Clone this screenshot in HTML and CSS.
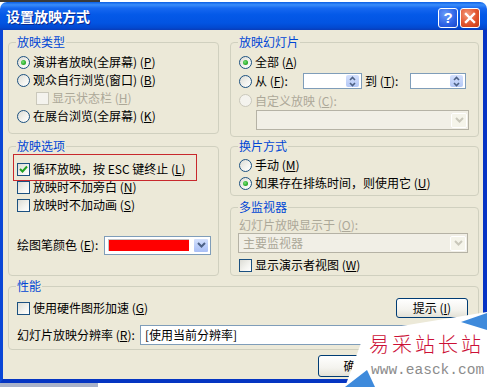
FILE: index.html
```html
<!DOCTYPE html>
<html lang="zh-CN">
<head>
<meta charset="utf-8">
<title>设置放映方式</title>
<link rel="stylesheet" href="styles.css">
</head>
<body>
<div class="window">
  <div class="topstrip"><span class="topstrip-dark"></span></div>
  <div class="titlebar">
    <span class="title">设置放映方式</span>
    <div class="tb-buttons">
      <span class="tb-btn help">?</span>
      <span class="tb-btn close"><svg width="12" height="12" viewBox="0 0 12 12"><path d="M2 2 L10 10 M10 2 L2 10" stroke="#fff" stroke-width="2.4" stroke-linecap="square"/></svg></span>
    </div>
  </div>
  <div class="frame">
    <div class="cols">
      <div class="col">
        <section class="g g-type">
          <span class="g-label">放映类型</span>
          <div class="row"><span class="radio on"></span><span>演讲者放映(全屏幕) (<u>P</u>)</span></div>
          <div class="row"><span class="radio"></span><span>观众自行浏览(窗口) (<u>B</u>)</span></div>
          <div class="row indent disabled"><span class="check dis"></span><span>显示状态栏 (<u>H</u>)</span></div>
          <div class="row"><span class="radio"></span><span>在展台浏览(全屏幕) (<u>K</u>)</span></div>
        </section>
        <section class="g g-opts">
          <span class="g-label">放映选项</span>
          <div class="highlight">
            <div class="row"><span class="check"><svg width="11" height="11" viewBox="0 0 11 11"><path d="M2 5 L4.5 7.5 L9 2.5" fill="none" stroke="#21A121" stroke-width="2"/></svg></span><span>循环放映，按 ESC 键终止 (<u>L</u>)</span></div>
          </div>
          <div class="row"><span class="check"></span><span>放映时不加旁白 (<u>N</u>)</span></div>
          <div class="row"><span class="check"></span><span>放映时不加动画 (<u>S</u>)</span></div>
          <div class="row pen-row">
            <span class="pen-label">绘图笔颜色 (<u>E</u>):</span>
            <span class="color-combo"><span class="swatch"></span><span class="drop-btn"><svg width="9" height="6" viewBox="0 0 9 6"><path d="M1 1 L4.5 4.5 L8 1" fill="none" stroke="#4D6185" stroke-width="2"/></svg></span></span>
          </div>
        </section>
      </div>
      <div class="col">
        <section class="g g-slides">
          <span class="g-label">放映幻灯片</span>
          <div class="row"><span class="radio on"></span><span>全部 (<u>A</u>)</span></div>
          <div class="row r-from"><span class="radio"></span><span class="from-label">从 (<u>F</u>):</span>
            <span class="spin w59"><span class="spin-btn"><svg width="7" height="11" viewBox="0 0 7 11"><path d="M1 4 L3.5 1.5 L6 4 M1 7 L3.5 9.5 L6 7" fill="none" stroke="#4D6185" stroke-width="1.6"/></svg></span></span>
            <span class="to-label">到 (<u>T</u>):</span>
            <span class="spin w56"><span class="spin-btn"><svg width="7" height="11" viewBox="0 0 7 11"><path d="M1 4 L3.5 1.5 L6 4 M1 7 L3.5 9.5 L6 7" fill="none" stroke="#4D6185" stroke-width="1.6"/></svg></span></span>
          </div>
          <div class="row r-custom disabled"><span class="radio dis"></span><span>自定义放映 (<u>C</u>):</span></div>
          <div class="combo dis custom-combo"><span class="combo-text"></span><span class="drop-btn dis"><svg width="9" height="6" viewBox="0 0 9 6"><path d="M1 1 L4.5 4.5 L8 1" fill="none" stroke="#C9C7BA" stroke-width="2"/></svg></span></div>
        </section>
        <section class="g g-advance">
          <span class="g-label">换片方式</span>
          <div class="row"><span class="radio"></span><span>手动 (<u>M</u>)</span></div>
          <div class="row"><span class="radio on"></span><span>如果存在排练时间，则使用它 (<u>U</u>)</span></div>
        </section>
        <section class="g g-monitor">
          <span class="g-label">多监视器</span>
          <div class="mon-label disabled">幻灯片放映显示于 (<u>O</u>):</div>
          <div class="combo dis mon-combo"><span class="combo-text">主要监视器</span><span class="drop-btn dis"><svg width="9" height="6" viewBox="0 0 9 6"><path d="M1 1 L4.5 4.5 L8 1" fill="none" stroke="#C9C7BA" stroke-width="2"/></svg></span></div>
          <div class="row mon-check"><span class="check"></span><span>显示演示者视图 (<u>W</u>)</span></div>
        </section>
      </div>
    </div>
    <section class="g g-perf">
      <span class="g-label">性能</span>
      <div class="row perf-row"><span class="check"></span><span>使用硬件图形加速 (<u>G</u>)</span><span class="btn tips">提示 (<u>I</u>)</span></div>
      <div class="row res-row"><span class="res-label">幻灯片放映分辨率 (<u>R</u>):</span><span class="combo res-combo"><span class="combo-text">[使用当前分辨率]</span></span></div>
    </section>
    <div class="actions">
      <span class="btn ok">确定</span>
      <span class="btn cancel"></span>
    </div>
  </div>
  <div class="bottomstrip"><span class="bottomstrip-gray"></span></div>

  <div class="watermark">
    <svg class="wm-bg" width="142" height="75" viewBox="0 0 142 75">
      <polygon points="20,20 142,0 142,75 0,75" fill="#ffffff"/>
      <polygon points="116,10 142,1 142,18" fill="#3E8ADB"/>
      <polygon points="0,75 22,58 30,75" fill="#3E8ADB"/>
    </svg>
    <div class="wm-text">
      <span class="wm-cn">易采站长站</span>
      <span class="wm-url">www.easck.com</span>
    </div>
  </div>
</div>
</body>
</html>
```
FILE: styles.css
```css
* { box-sizing: border-box; }
html, body { margin: 0; padding: 0; }
body {
  width: 487px;
  height: 387px;
  overflow: hidden;
  background: #ffffff;
  font-family: "Noto Sans CJK SC", "Liberation Sans", sans-serif;
  font-size: 12px;
  line-height: 14px;
  color: #000;
}
u { text-decoration: underline; text-underline-offset: 1px; }

.window {
  position: relative;
  width: 487px;
  height: 387px;
  display: flex;
  flex-direction: column;
}
.topstrip { height: 2px; background: #ffffff; display: flex; }
.topstrip-dark { width: 100px; background: #3a3a3a; }

.titlebar {
  height: 28px;
  border-radius: 7px 7px 0 0;
  background: linear-gradient(to bottom, #0A5EE4 0%, #3A8DFA 10%, #1768F0 22%, #0459E8 45%, #0254E2 75%, #0249D0 92%, #0A3CB8 100%);
  display: flex;
  align-items: center;
  padding: 0 7px 0 6px;
}
.title {
  color: #fff;
  font-weight: bold;
  font-size: 14px;
  text-shadow: 1px 1px 0 #0B2A8F;
  flex: 1;
}
.tb-buttons { display: flex; gap: 2px; margin-top: 4px; }
.tb-btn {
  width: 20px;
  height: 20px;
  border: 1px solid #fff;
  border-radius: 3px;
  display: flex;
  align-items: center;
  justify-content: center;
  color: #fff;
  font-family: "Liberation Sans", sans-serif;
  font-weight: bold;
  font-size: 15px;
}
.help { background: radial-gradient(circle at 35% 30%, #6A9CF8 0%, #2C62E6 60%, #1947C9 100%); }
.close { background: radial-gradient(circle at 35% 30%, #F39A7C 0%, #E2552E 55%, #C63B16 100%); }

.frame {
  height: 353px;
  background: #ECE9D8;
  border-left: 3px solid #0A46D6;
  border-right: 4px solid #0533C4;
  border-bottom: 4px solid #0535C2;
  padding: 0 4px 0 5px;
  display: flex;
  flex-direction: column;
}
.bottomstrip { height: 4px; display: flex; background: #ffffff; }
.bottomstrip-gray { width: 98px; background: #A9B2C9; }

.cols { display: flex; gap: 11px; }
.col { display: flex; flex-direction: column; }
.col:first-child { width: 211px; }
.col:last-child { width: 249px; }

.g {
  position: relative;
  border: 1px solid #D0D0BF;
  border-radius: 4px;
  padding: 0 6px 0 8px;
}
.g-label {
  position: absolute;
  top: -8px;
  left: 7px;
  padding: 0 1px;
  background: #ECE9D8;
  color: #0046D5;
  line-height: 14px;
  white-space: nowrap;
}
.row {
  display: flex;
  align-items: center;
  height: 18px;
  gap: 3px;
  white-space: nowrap;
}
.disabled { color: #ACA899; }
.indent { padding-left: 19px; }

.radio {
  width: 13px;
  height: 13px;
  flex: none;
  border-radius: 50%;
  border: 1px solid #1C5180;
  background: linear-gradient(135deg, #DCDCD5 0%, #F4F4F0 60%, #ffffff 100%);
  position: relative;
}
.radio.on::after {
  content: "";
  position: absolute;
  left: 3px;
  top: 3px;
  width: 5px;
  height: 5px;
  border-radius: 50%;
  background: radial-gradient(circle at 40% 40%, #7BE27A 0%, #2FB12E 55%, #1A8E1A 100%);
}
.radio.dis { border-color: #CAC8BB; background: #F4F3EE; }

.check {
  width: 13px;
  height: 13px;
  flex: none;
  border: 1px solid #1C5180;
  background: linear-gradient(135deg, #DCDCD5 0%, #F4F4F0 60%, #ffffff 100%);
  display: flex;
  align-items: center;
  justify-content: center;
}
.check.dis { border-color: #CAC8BB; background: #F4F3EE; }

/* groups: border line y = label centre */
.g-type { margin-top: 12px; height: 92px; padding-top: 10px; }
.g-opts { margin-top: 12px; height: 130px; padding-top: 7px; }
.g-slides { margin-top: 12px; height: 95px; padding-top: 10px; }
.g-advance { margin-top: 9px; height: 50px; padding-top: 9px; }
.g-monitor { margin-top: 11px; height: 69px; padding-top: 8px; }
.g-perf { margin-top: 10px; height: 64px; padding-top: 11px; padding-right: 10px; }

.highlight {
  margin-left: -4px;
  width: 184px;
  height: 27px;
  border: 1px solid #C8282C;
  padding: 5px 0 0 3px;
  margin-bottom: -3px;
}

.pen-row { margin-top: 21px; height: 20px; gap: 0; }
.pen-label { width: 87px; }
.color-combo {
  width: 107px;
  height: 19px;
  background: #fff;
  border: 1px solid #7F9DB9;
  display: flex;
  align-items: center;
  padding: 0 1px 0 3px;
  gap: 2px;
}
.swatch {
  width: 81px;
  height: 12px;
  background: #FF0000;
  border: 1px solid #C5C5C5;
  border-width: 1px 0 0 1px;
}
.drop-btn {
  width: 16px;
  height: 15px;
  margin-left: auto;
  border: 1px solid #fff;
  border-radius: 2px;
  background: linear-gradient(to bottom, #D4E0FC 0%, #B9CCF9 60%, #A9BFF5 100%);
  display: flex;
  align-items: center;
  justify-content: center;
}
.drop-btn.dis { background: #F5F4EA; border-color: #fff; }

.r-from { height: 20px; gap: 0; }
.r-from .radio { margin-right: 3px; }
.from-label { width: 48px; }
.to-label { width: 48px; padding-left: 3px; }
.spin {
  height: 16px;
  background: #fff;
  border: 1px solid #7F9DB9;
  display: flex;
  align-items: center;
  justify-content: flex-end;
  padding-right: 2px;
}
.w59 { width: 59px; }
.w56 { width: 56px; }
.spin-btn {
  width: 13px;
  height: 12px;
  border-radius: 2px;
  background: linear-gradient(to bottom, #D4E0FC 0%, #B4C8F6 100%);
  display: flex;
  align-items: center;
  justify-content: center;
}
.r-custom { height: 19px; }

.combo {
  height: 20px;
  border: 1px solid #7F9DB9;
  background: #fff;
  display: flex;
  align-items: center;
  padding: 0 1px 0 4px;
}
.combo.dis { background: #F1EFE6; border-color: #B5B2A5; color: #ACA899; }
.combo-text { flex: 1; white-space: nowrap; }
.custom-combo { margin-left: 17px; width: 213px; }

.mon-label { height: 17px; display: flex; align-items: center; white-space: nowrap; }
.mon-combo { margin-left: -1px; width: 230px; }
.mon-check { margin-top: 3px; }

.perf-row { height: 20px; }
.tips { margin-left: auto; width: 72px; }
.res-row { margin-top: 7px; height: 20px; gap: 0; }
.res-label { width: 123px; }
.res-combo { width: 327px; height: 20px; }

.btn {
  height: 20px;
  border: 1px solid #003C74;
  border-radius: 3px;
  background: linear-gradient(to bottom, #ffffff 0%, #F4F3EE 60%, #E3E1D6 100%);
  display: flex;
  align-items: center;
  justify-content: center;
  white-space: nowrap;
}
.actions {
  display: flex;
  justify-content: flex-end;
  gap: 6px;
  margin-top: 5px;
  padding-right: 5px;
}
.actions .btn { width: 75px; height: 22px; }

.watermark {
  position: absolute;
  left: 345px;
  top: 312px;
  width: 142px;
  height: 75px;
}
.wm-bg { position: absolute; left: 0; top: 0; }
.wm-text {
  position: absolute;
  left: 24px;
  top: 19px;
  display: flex;
  flex-direction: column;
  align-items: flex-start;
}
.wm-cn {
  color: #CC1036;
  font-family: "Noto Sans CJK SC", sans-serif;
  font-weight: 300;
  font-size: 20px;
  line-height: 26px;
  letter-spacing: 3px;
  white-space: nowrap;
}
.wm-url {
  color: #8C8C8C;
  font-family: "Liberation Mono", monospace;
  font-size: 14.5px;
  line-height: 14px;
  margin-top: 6px;
  margin-left: 2px;
  white-space: nowrap;
}
```
